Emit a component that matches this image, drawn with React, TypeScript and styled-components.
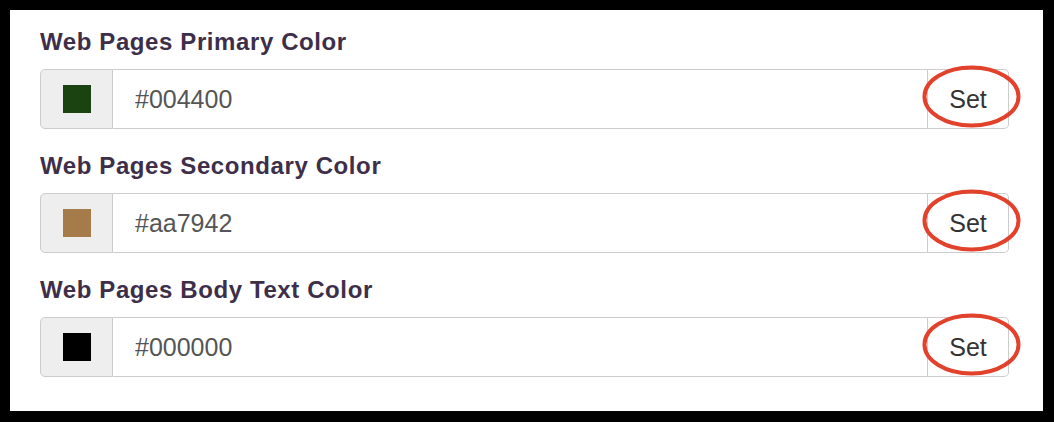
import React from "react";
import styled, { createGlobalStyle } from "styled-components";

const colors = [
  { label: "Web Pages Primary Color", value: "#004400", swatch: "#1b4312" },
  { label: "Web Pages Secondary Color", value: "#aa7942", swatch: "#a57b4a" },
  { label: "Web Pages Body Text Color", value: "#000000", swatch: "#000000" },
];

const App = () => {
  return (
    <>
      <Global />
      <Panel>
        {colors.map((c) => (
          <Row key={c.label}>
            <Label>{c.label}</Label>
            <Group>
              <Addon>
                <Swatch $color={c.swatch} />
              </Addon>
              <Field readOnly value={c.value} />
              <SetButton>
                Set
                <Circle viewBox="0 0 100 64" preserveAspectRatio="none">
                  <ellipse cx="50" cy="32" rx="47.5" ry="29.5" fill="none" stroke="#e2412b" strokeWidth="4" />
                </Circle>
              </SetButton>
            </Group>
          </Row>
        ))}
      </Panel>
    </>
  );
};

export default App;

const Global = createGlobalStyle`
body{
    margin: 0;
    background: #000;
    font-family: "Liberation Sans", Arial, sans-serif;
}
`;

const Panel = styled.div`
width: 1033px;
height: 401px;
box-sizing: border-box;
margin: 10px 0 0 10px;
background: #fff;
padding: 20px 34px 0 30px;
display: flex;
flex-direction: column;
gap: 25px;
`;

const Row = styled.div`
display: flex;
flex-direction: column;
gap: 15px;
`;

const Label = styled.div`
font-size: 24px;
line-height: 24px;
letter-spacing: 0.6px;
font-weight: 700;
color: #3d2f4a;
`;

const Group = styled.div`
display: flex;
height: 60px;
`;

const Addon = styled.div`
width: 73px;
box-sizing: border-box;
background: #eeeeee;
border: 1px solid #cccccc;
border-radius: 5px 0 0 5px;
display: flex;
align-items: center;
justify-content: center;
`;

const Swatch = styled.div<{ $color: string }>`
width: 28px;
height: 28px;
background: ${(p) => p.$color};
`;

const Field = styled.input`
flex: 1;
min-width: 0;
box-sizing: border-box;
border: 1px solid #cccccc;
border-left: none;
padding: 0 0 0 22px;
font-family: "Liberation Sans", Arial, sans-serif;
font-size: 25px;
color: #555555;
background: #fff;
outline: none;
`;

const SetButton = styled.div`
position: relative;
width: 81px;
box-sizing: border-box;
border: 1px solid #cccccc;
border-left: none;
border-radius: 0 5px 5px 0;
background: #fff;
display: flex;
align-items: center;
justify-content: center;
font-size: 25px;
color: #333333;
`;

const Circle = styled.svg`
position: absolute;
left: -6px;
top: -5px;
width: 99px;
height: 63px;
overflow: visible;
`;
